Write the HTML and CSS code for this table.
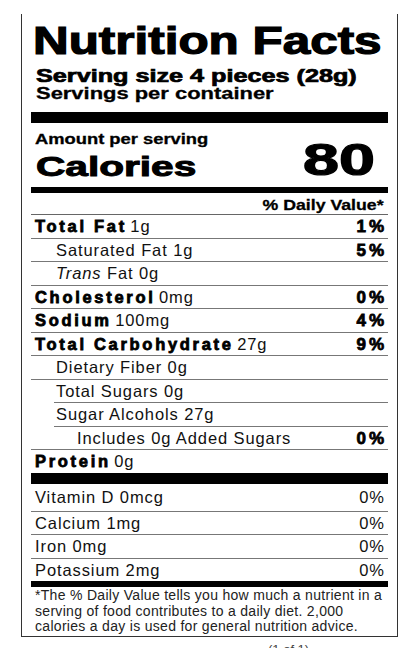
FILE: index.html
```html
<!DOCTYPE html>
<html lang="en">
<head>
<meta charset="utf-8">
<title>Nutrition Facts</title>
<link rel="stylesheet" href="styles.css">
</head>
<body>
<div class="page">
  <section class="label">
    <h1 class="title"><span class="sx sx-title">Nutrition Facts</span></h1>
    <p class="serving"><span class="sx sx-serving">Serving size 4 pieces (28g)</span></p>
    <p class="servings"><span class="sx sx-servings">Servings per container</span></p>
    <div class="bar bar-thick"></div>
    <div class="cal">
      <div class="cal-left">
        <div class="amount"><span class="sx sx-amount">Amount per serving</span></div>
        <div class="cal-word"><span class="sx sx-cal">Calories</span></div>
      </div>
      <div class="cal-num"><span class="sx sx-num">80</span></div>
    </div>
    <div class="bar bar-med"></div>
    <div class="dv-head"><span class="sx sx-dv">% Daily Value*</span></div>
    <ul class="rows">
      <li class="row"><span class="name"><b class="hv">Total Fat</b> 1g</span><b class="pct hv">1%</b></li>
      <li class="row sub"><span class="name">Saturated Fat 1g</span><b class="pct hv">5%</b></li>
      <li class="row sub"><span class="name"><i>Trans</i> Fat 0g</span></li>
      <li class="row"><span class="name"><b class="hv">Cholesterol</b> 0mg</span><b class="pct hv">0%</b></li>
      <li class="row"><span class="name"><b class="hv">Sodium</b> 100mg</span><b class="pct hv">4%</b></li>
      <li class="row"><span class="name"><b class="hv">Total Carbohydrate</b> 27g</span><b class="pct hv">9%</b></li>
      <li class="row sub"><span class="name">Dietary Fiber 0g</span></li>
      <li class="row sub sub-line"><span class="name">Total Sugars 0g</span></li>
      <li class="row sub sub-line"><span class="name">Sugar Alcohols 27g</span></li>
      <li class="row sub2"><span class="name">Includes 0g Added Sugars</span><b class="pct hv">0%</b></li>
      <li class="row last"><span class="name"><b class="hv">Protein</b> 0g</span></li>
    </ul>
    <div class="bar bar-thick"></div>
    <ul class="rows vits">
      <li class="row first"><span class="name">Vitamin D 0mcg</span><span class="pct">0%</span></li>
      <li class="row"><span class="name">Calcium 1mg</span><span class="pct">0%</span></li>
      <li class="row"><span class="name">Iron 0mg</span><span class="pct">0%</span></li>
      <li class="row last"><span class="name">Potassium 2mg</span><span class="pct">0%</span></li>
    </ul>
    <div class="bar bar-med"></div>
    <p class="foot">*The % Daily Value tells you how much a nutrient in a<br>serving of food contributes to a daily diet. 2,000<br>calories a day is used for general nutrition advice.</p>
  </section>
  <p class="pager">(1 of 1)</p>
</div>
</body>
</html>
```
FILE: styles.css
```css
html, body {
  margin: 0;
  padding: 0;
  background: #fff;
}
body {
  font-family: "Liberation Sans", Arial, sans-serif;
  color: #000;
  width: 400px;
  height: 648px;
  overflow: hidden;
}
.page {
  padding-top: 14px;
}
.label {
  margin-left: 21px;
  width: 357px;
  padding: 0 9px 1px;
  border: 1px solid #333;
  border-top: none;
}
.sx {
  display: inline-block;
  white-space: nowrap;
  transform-origin: left center;
}
.title {
  margin: 0;
  padding: 8px 0 0 2px;
  font-size: 38px;
  line-height: 38px;
  font-weight: 700;
}
.sx-title {
  transform: scaleX(1.3);
  -webkit-text-stroke: 1.2px #000;
}
.serving, .servings {
  margin: 0;
  padding-left: 5px;
  font-weight: 700;
  line-height: 18px;
}
.serving {
  margin-top: 7px;
  font-size: 18px;
}
.sx-serving {
  transform: scaleX(1.4);
  -webkit-text-stroke: 0.7px #000;
}
.servings {
  font-size: 17px;
}
.sx-servings {
  transform: scaleX(1.29);
  -webkit-text-stroke: 0.3px #000;
}
.bar {
  background: #000;
}
.bar-thick {
  height: 11px;
}
.bar-med {
  height: 6px;
}
.servings + .bar-thick {
  margin-top: 9px;
}
.cal {
  display: flex;
  justify-content: space-between;
  align-items: flex-end;
  margin-bottom: 5px;
}
.amount {
  margin-top: 8px;
  padding-left: 4px;
  font-size: 14px;
  line-height: 16px;
  font-weight: 700;
}
.sx-amount {
  transform: scaleX(1.31);
  -webkit-text-stroke: 0.3px #000;
}
.cal-word {
  margin-top: 5px;
  padding-left: 5px;
  font-size: 28px;
  line-height: 30px;
  font-weight: 700;
}
.sx-cal {
  transform: scaleX(1.45);
  -webkit-text-stroke: 1px #000;
}
.cal-num {
  padding-right: 13px;
  font-size: 44px;
  line-height: 44px;
  font-weight: 700;
}
.sx-num {
  transform-origin: right center;
  transform: scaleX(1.47);
  -webkit-text-stroke: 1.2px #000;
}
.dv-head {
  padding: 3px 4px 0 0;
  text-align: right;
  font-size: 15px;
  line-height: 18px;
  font-weight: 700;
  border-bottom: 1px solid #666;
}
.sx-dv {
  transform-origin: right center;
  transform: scaleX(1.18);
  -webkit-text-stroke: 0.3px #000;
}
.rows {
  list-style: none;
  margin: 0;
  padding: 0;
}
.row {
  display: flex;
  justify-content: space-between;
  align-items: baseline;
  padding: 0 4px;
  height: 22.5px;
  line-height: 22.5px;
  font-size: 16.5px;
  letter-spacing: 0.9px;
  color: #111;
  border-bottom: 1px solid #777;
  white-space: nowrap;
}
.row.last {
  border-bottom: none;
}
.hv {
  font-weight: 700;
  letter-spacing: 2.7px;
  -webkit-text-stroke: 0.8px #000;
  color: #000;
}
.name .hv {
  margin-right: -2px;
}
.pct.hv {
  font-size: 17px;
  letter-spacing: 3px;
  margin-right: -3px;
}
.row .pct {
  text-align: right;
}
.vits .pct {
  letter-spacing: 1px;
  margin-right: -1px;
}
.row.sub {
  padding-left: 25px;
}
.row.sub-line {
  margin-left: 23px;
  padding-left: 2px;
}
.row.sub2 {
  padding-left: 46px;
}
.row i {
  font-style: italic;
}
.vits .row.first {
  height: 27px;
  line-height: 27px;
}
.foot {
  margin: 1px 0 0;
  padding: 0 4px;
  font-size: 14px;
  line-height: 15.5px;
  letter-spacing: 0.3px;
  color: #222;
  white-space: nowrap;
}
.pager {
  margin: 5px 0 0;
  padding-left: 268px;
  font-size: 13px;
  line-height: 15px;
  color: #444;
}
```
